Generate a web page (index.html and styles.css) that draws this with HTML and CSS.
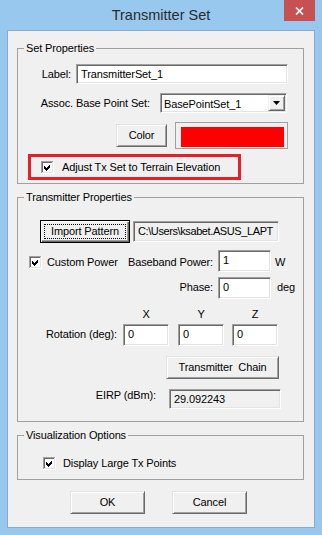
FILE: index.html
```html
<!DOCTYPE html>
<html lang="en">
<head>
<meta charset="utf-8">
<title>Transmitter Set</title>
<link rel="stylesheet" href="styles.css">
</head>
<body>
<div class="window">
  <header class="titlebar">
    <div class="title">Transmitter Set</div>
    <div class="close"><svg width="9" height="8" viewBox="0 0 9 8"><path d="M1 0.5L8 7.5M8 0.5L1 7.5" stroke="#fff" stroke-width="1.7"/></svg></div>
  </header>
  <main class="client">
    <fieldset class="group g-set">
      <legend>Set Properties</legend>
      <div class="row r-label">
        <span class="lbl l-label">Label:</span>
        <div class="field f-label">TransmitterSet_1</div>
      </div>
      <div class="row r-assoc">
        <span class="lbl l-assoc">Assoc. Base Point Set:</span>
        <div class="field combo">
          <span class="combo-text">BasePointSet_1</span>
          <span class="combo-btn"><svg width="7" height="4" viewBox="0 0 7 4"><path d="M0 0H7L3.5 4Z" fill="#000"/></svg></span>
        </div>
      </div>
      <div class="row r-color">
        <div class="btn b-color">Color</div>
        <div class="swatch"><div class="swatch-fill"></div></div>
      </div>
      <div class="highlight">
        <svg class="cb" width="13" height="13" viewBox="0 0 13 13" shape-rendering="crispEdges"><rect width="13" height="13" fill="#fff"/><path d="M0 0h12v1H1v11H0z" fill="#a0a0a0"/><path d="M1 1h10v1H2v9H1z" fill="#696969"/><path d="M1 11h11v1H1zM11 1h1v10h-1z" fill="#e3e3e3"/><path d="M0 12h13v1H0zM12 0h1v12h-1z" fill="#fff"/><path d="M3 5L5 7L9 3V6L5 10L3 8Z" fill="#000"/></svg>
        <span class="cb-text">Adjust Tx Set to Terrain Elevation</span>
      </div>
    </fieldset>
    <fieldset class="group g-tx">
      <legend>Transmitter Properties</legend>
      <div class="row r-import">
        <div class="btn btn-default b-import"><span class="focus">Import Pattern</span></div>
        <div class="field readonly f-path">C:\Users\ksabet.ASUS_LAPT</div>
      </div>
      <div class="row r-power">
        <div class="power-left">
          <svg class="cb" width="13" height="13" viewBox="0 0 13 13" shape-rendering="crispEdges"><rect width="13" height="13" fill="#fff"/><path d="M0 0h12v1H1v11H0z" fill="#a0a0a0"/><path d="M1 1h10v1H2v9H1z" fill="#696969"/><path d="M1 11h11v1H1zM11 1h1v10h-1z" fill="#e3e3e3"/><path d="M0 12h13v1H0zM12 0h1v12h-1z" fill="#fff"/><path d="M3 5L5 7L9 3V6L5 10L3 8Z" fill="#000"/></svg>
          <span>Custom Power</span>
        </div>
        <span class="lbl l-power">Baseband Power:</span>
        <div class="field f-num">1</div>
        <span class="unit u-w">W</span>
      </div>
      <div class="row r-phase">
        <span class="lbl l-phase">Phase:</span>
        <div class="field f-num">0</div>
        <span class="unit u-deg">deg</span>
      </div>
      <div class="row r-axes">
        <span class="axis">X</span>
        <span class="axis ax-y">Y</span>
        <span class="axis ax-z">Z</span>
      </div>
      <div class="row r-rot">
        <span class="lbl l-rot">Rotation (deg):</span>
        <div class="field f-rot">0</div>
        <div class="field f-rot ax-y">0</div>
        <div class="field f-rot ax-z">0</div>
      </div>
      <div class="row r-chain">
        <div class="btn b-chain">Transmitter&nbsp; Chain</div>
      </div>
      <div class="row r-eirp">
        <span class="lbl l-eirp">EIRP (dBm):</span>
        <div class="field readonly f-eirp">29.092243</div>
      </div>
    </fieldset>
    <fieldset class="group g-vis">
      <legend>Visualization Options</legend>
      <div class="row r-vis">
        <svg class="cb" width="13" height="13" viewBox="0 0 13 13" shape-rendering="crispEdges"><rect width="13" height="13" fill="#fff"/><path d="M0 0h12v1H1v11H0z" fill="#a0a0a0"/><path d="M1 1h10v1H2v9H1z" fill="#696969"/><path d="M1 11h11v1H1zM11 1h1v10h-1z" fill="#e3e3e3"/><path d="M0 12h13v1H0zM12 0h1v12h-1z" fill="#fff"/><path d="M3 5L5 7L9 3V6L5 10L3 8Z" fill="#000"/></svg>
        <span>Display Large Tx Points</span>
      </div>
    </fieldset>
    <div class="row r-buttons">
      <div class="btn b-ok">OK</div>
      <div class="btn b-cancel">Cancel</div>
    </div>
  </main>
</div>
</body>
</html>
```

FILE: styles.css
```css
* { box-sizing: border-box; }
html, body { margin: 0; padding: 0; }
body {
  width: 322px;
  height: 535px;
  overflow: hidden;
  background: #99c8ee;
  font-family: "Liberation Sans", Arial, sans-serif;
  font-size: 11px;
  line-height: 13px;
  letter-spacing: -0.12px;
  color: #000;
}
.window {
  width: 322px;
  height: 535px;
  display: flex;
  flex-direction: column;
  background: #99c8ee;
}
.titlebar {
  height: 30px;
  flex: none;
  display: grid;
  grid-template-columns: 1fr auto 1fr;
}
.title {
  grid-column: 2;
  font-size: 14.5px;
  line-height: 30px;
  letter-spacing: 0;
  color: #2b2b2b;
}
.close {
  grid-column: 3;
  justify-self: end;
  align-self: start;
  width: 31px;
  height: 21px;
  margin-right: 7px;
  background: #c75050;
  display: flex;
  align-items: center;
  justify-content: center;
}
.close svg { display: block; }
.client {
  margin: 0 7px;
  height: 498px;
  flex: none;
  border: 1px solid #8aabcc;
  background: #f0f0f0;
  padding: 0 10px 0 9px;
}
.group {
  margin: 0;
  padding: 0;
  min-width: 0;
  border: 1px solid #a0a0a0;
}
.group legend {
  margin-left: 6px;
  padding: 0 2px;
  line-height: 13px;
}
.g-set { margin-top: 11px; padding-bottom: 3px; }
.g-tx { margin-top: 7px; padding-bottom: 12px; }
.g-vis { margin-top: 7px; padding-bottom: 9px; }

.row { display: flex; align-items: flex-start; }
.lbl { flex: none; text-align: right; white-space: nowrap; }
.unit { flex: none; }
.cb { display: block; flex: none; }

.field {
  flex: none;
  height: 20px;
  border: 1px solid;
  border-color: #a0a0a0 #fff #fff #a0a0a0;
  box-shadow: inset 1px 1px #696969, inset -1px -1px #e3e3e3;
  background: #fff;
  padding: 3px 3px 0 4px;
  white-space: nowrap;
  overflow: hidden;
}
.readonly { background: #f0f0f0; }

.btn {
  flex: none;
  height: 23px;
  border: 1px solid;
  border-color: #e3e3e3 #696969 #696969 #e3e3e3;
  box-shadow: inset 1px 1px #fff, inset -1px -1px #a0a0a0;
  background: #f0f0f0;
  display: flex;
  align-items: center;
  justify-content: center;
  white-space: nowrap;
}
.btn-default {
  border: 1px solid #000;
  box-shadow: inset 1px 1px #fff, inset -1px -1px #696969, inset -2px -2px #a0a0a0;
  align-items: stretch;
}
.focus {
  flex: 1;
  margin: 3px;
  border: 1px dotted #000;
  display: flex;
  align-items: center;
  justify-content: center;
}

/* Set Properties */
.r-label { margin-top: 9px; height: 20px; }
.l-label { width: 53px; margin-top: 4px; margin-right: 5px; }
.f-label { width: 212px; }
.r-assoc { margin-top: 9px; height: 20px; }
.l-assoc { width: 132px; margin-top: 4px; margin-right: 10px; }
.combo {
  width: 127px;
  padding: 1px;
  display: flex;
}
.combo-text { flex: 1; padding: 3px 0 0 2px; overflow: hidden; }
.combo-btn {
  flex: none;
  width: 17px;
  height: 16px;
  border: 1px solid;
  border-color: #f0f0f0 #696969 #696969 #f0f0f0;
  box-shadow: inset 1px 1px #fff, inset -1px -1px #a0a0a0;
  background: #f0f0f0;
  display: flex;
  align-items: center;
  justify-content: center;
}
.combo-btn svg { display: block; }
.r-color { margin-top: 9px; height: 27px; align-items: center; padding-left: 98px; }
.b-color { width: 51px; margin-right: 8px; }
.swatch {
  flex: none;
  width: 113px;
  height: 27px;
  border: 1px solid #a0a0a0;
  padding: 4px 3px 1px 5px;
}
.swatch-fill { height: 100%; background: #ff0000; }
.highlight {
  margin: 5px 0 0 10px;
  width: 213px;
  height: 26px;
  border: 3px solid #e5202a;
  display: flex;
  align-items: flex-start;
  padding: 4px 0 0 10px;
}
.highlight .cb { margin-right: 8px; }

/* Transmitter Properties */
.r-import { margin-top: 16px; height: 23px; align-items: center; padding-left: 22px; }
.b-import { width: 90px; margin-right: 3px; }
.f-path { width: 146px; height: 21px; padding-right: 0; letter-spacing: -0.4px; }
.r-power { margin-top: 7px; height: 22px; }
.power-left {
  flex: none;
  width: 102px;
  padding-left: 11px;
  margin-top: 6px;
  display: flex;
  align-items: center;
  white-space: nowrap;
}
.power-left .cb { margin-right: 5px; }
.l-power { width: 93px; margin-top: 6px; margin-right: 5px; }
.f-num { width: 53px; height: 22px; }
.u-w { margin-left: 4px; margin-top: 6px; }
.r-phase { margin-top: 5px; height: 22px; padding-left: 102px; }
.l-phase { width: 93px; margin-top: 4px; margin-right: 5px; }
.u-deg { margin-left: 6px; margin-top: 4px; }
.r-axes { margin-top: 9px; height: 13px; padding-left: 105px; }
.axis { width: 46px; text-align: center; flex: none; }
.ax-y { margin-left: 9px; }
.ax-z { margin-left: 8px; }
.r-rot { margin-top: 3px; height: 22px; }
.l-rot { width: 99px; margin-top: 4px; margin-right: 6px; }
.f-rot { width: 46px; height: 22px; }
.r-chain { margin-top: 10px; padding-left: 148px; }
.b-chain { width: 113px; }
.r-eirp { margin-top: 10px; height: 20px; }
.l-eirp { width: 138px; margin-right: 13px; }
.f-eirp { width: 112px; height: 20px; }

/* Visualization */
.r-vis { margin-top: 15px; padding-left: 25px; align-items: center; }
.r-vis .cb { margin-right: 7px; }

/* Dialog buttons */
.r-buttons { margin-top: 11px; padding-left: 53px; }
.b-ok, .b-cancel { width: 75px; }
.b-cancel { margin-left: 27px; }
```
